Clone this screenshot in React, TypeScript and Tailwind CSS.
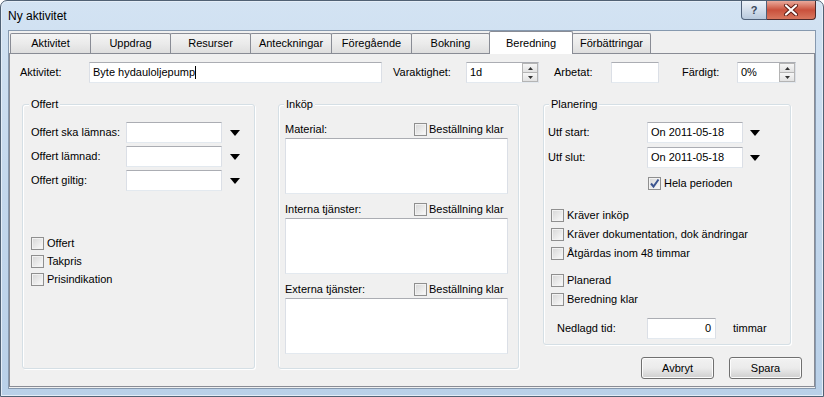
import React from 'react'

const tabs = [
  { label: 'Aktivitet', w: 'w-[81px]' },
  { label: 'Uppdrag', w: 'w-[81px]' },
  { label: 'Resurser', w: 'w-[81px]' },
  { label: 'Anteckningar', w: 'w-[82px]' },
  { label: 'Föregående', w: 'w-[81px]' },
  { label: 'Bokning', w: 'w-[79px]' },
  { label: 'Beredning', w: 'w-[84px]', active: true },
  { label: 'Förbättringar', w: 'w-[79px]' },
]

const boxCls =
  'h-[21px] bg-white border border-[#dbdfe6] border-t-[#abadb3] border-b-[#e3e9ef] px-[3px] leading-[19px] whitespace-nowrap overflow-hidden'

function DropArrow() {
  return (
    <svg width="10" height="6" viewBox="0 0 10 6" className="shrink-0">
      <polygon points="0,0 10,0 5,6" fill="#000" />
    </svg>
  )
}

function Check({ checked = false }: { checked?: boolean }) {
  return (
    <span className="w-[13px] h-[13px] shrink-0 border border-[#8f8f8f] bg-linear-to-br from-[#d6d6d6] to-[#fbfbfb] shadow-[inset_0_0_0_1px_#f2f2f2] flex items-center justify-center">
      {checked && (
        <svg width="11" height="11" viewBox="0 0 11 11">
          <path d="M2 5.5 L4.5 8.5 L9.5 1.5" stroke="#3c5590" strokeWidth="2" fill="none" />
        </svg>
      )}
    </span>
  )
}

function CheckRow({ label, checked, h = 'h-[18px]' }: { label: string; checked?: boolean; h?: string }) {
  return (
    <div className={`flex items-center gap-[3px] ${h}`}>
      <Check checked={checked} />
      <span>{label}</span>
    </div>
  )
}

function Spinner() {
  return (
    <div className="w-[16px] h-full flex flex-col shrink-0">
      <div className="flex-1 border border-[#b4b4b4] bg-linear-to-b from-[#f6f6f6] to-[#e2e2e2] flex items-center justify-center">
        <svg width="5" height="3" viewBox="0 0 5 3">
          <polygon points="0,3 5,3 2.5,0" fill="#333" />
        </svg>
      </div>
      <div className="flex-1 border border-t-0 border-[#b4b4b4] bg-linear-to-b from-[#f6f6f6] to-[#e2e2e2] flex items-center justify-center">
        <svg width="5" height="3" viewBox="0 0 5 3">
          <polygon points="0,0 5,0 2.5,3" fill="#333" />
        </svg>
      </div>
    </div>
  )
}

function Button({ label }: { label: string }) {
  return (
    <button className="w-[73px] h-[22px] rounded-[3px] border border-[#707070] bg-linear-to-b from-[#f2f2f2] via-[#ebebeb] to-[#cfcfcf] shadow-[inset_0_0_0_1px_#fcfcfc] text-[11px] text-black">
      {label}
    </button>
  )
}

export default function App() {
  return (
    <div className="w-[824px] h-[397px] font-['Liberation_Sans',Arial,sans-serif] text-[11px] text-black">
      {/* window frame */}
      <div className="w-full h-full flex flex-col px-[7px] pb-[7px] rounded-t-[7px] border border-[#506174] bg-linear-to-b from-[#d3e3f3] via-[#c3d7ec] to-[#b9d0e8] shadow-[inset_0_0_0_1px_#e4edf7]">
        {/* title bar */}
        <div className="h-[29px] flex justify-between">
          <div className="self-center text-[12px] pt-[1px]">Ny aktivitet</div>
          <div className="flex self-start">
            <div className="w-[26px] h-[19px] border border-[#4f6078] border-t-0 rounded-bl-[4px] bg-linear-to-b from-[#eef3f9] via-[#d3deeb] to-[#b8c9dd] flex items-center justify-center text-[11px] font-bold text-[#39475a]">
              ?
            </div>
            <div className="w-[49px] h-[19px] border border-[#4f2a2a] border-t-0 border-l-0 rounded-br-[4px] bg-linear-to-b from-[#e9a99b] via-[#c9503c] to-[#d8775f] flex items-center justify-center">
              <svg width="16" height="12" viewBox="0 0 16 12">
                <path d="M3 1.5 L13 10.5 M13 1.5 L3 10.5" stroke="#5a1a12" strokeWidth="4" strokeLinecap="round" />
                <path d="M3 1.5 L13 10.5 M13 1.5 L3 10.5" stroke="#fff" strokeWidth="2.2" strokeLinecap="round" />
              </svg>
            </div>
          </div>
        </div>

        {/* client area */}
        <div className="flex-1 flex flex-col bg-[#f0f0f0] border border-[#8699af] pb-[1px]">
          {/* tabs */}
          <div className="h-[22px] flex items-end pl-[1px]">
            {tabs.map((t, i) =>
              t.active ? (
                <div
                  key={t.label}
                  className={`${t.w} h-[23px] -mb-px -ml-px relative z-10 bg-white border border-b-0 border-[#898c95] rounded-t-[2px] flex justify-center pt-[3px]`}
                >
                  {t.label}
                </div>
              ) : (
                <div
                  key={t.label}
                  className={`${t.w} h-[20px] ${i > 0 ? '-ml-px' : ''} border border-b-0 border-[#898c95] rounded-t-[2px] bg-linear-to-b from-[#f3f3f3] via-[#ebebeb] to-[#dedede] flex items-center justify-center`}
                >
                  {t.label}
                </div>
              )
            )}
          </div>

          {/* tab page */}
          <div className="flex-1 border border-[#898c95] bg-[#f0f0f0] pt-[8px] pl-[10px]">
            {/* top row */}
            <div className="flex items-center h-[21px]">
              <span className="w-[69px]">Aktivitet:</span>
              <div className={`${boxCls} w-[293px] flex items-center`}>
                <span>Byte hydauloljepump</span>
                <span className="w-px h-[13px] bg-black" />
              </div>
              <span className="ml-[11px] w-[73px]">Varaktighet:</span>
              <div className={`${boxCls} w-[73px] flex pr-0 pl-[3px]`}>
                <span className="flex-1">1d</span>
                <Spinner />
              </div>
              <span className="ml-[15px] w-[57px]">Arbetat:</span>
              <div className={`${boxCls} w-[48px]`} />
              <span className="ml-[23px] w-[55px]">Färdigt:</span>
              <div className={`${boxCls} w-[59px] flex pr-0`}>
                <span className="flex-1">0%</span>
                <Spinner />
              </div>
            </div>

            {/* groups */}
            <div className="flex items-start mt-[21px] ml-[2px]">
              {/* Offert */}
              <div className="w-[233px] h-[265px] border border-[#d5dfe5] rounded-[3px] shadow-[inset_1px_1px_0_#fff,1px_1px_0_#fff] flex flex-col pl-[8px]">
                <span className="-mt-[8px] -ml-[2px] px-[2px] self-start bg-[#f0f0f0] leading-[14px]">Offert</span>
                <div className="mt-[11px] flex flex-col gap-[3px]">
                  {['Offert ska lämnas:', 'Offert lämnad:', 'Offert giltig:'].map(l => (
                    <div key={l} className="flex items-center h-[21px]">
                      <span className="w-[95px]">{l}</span>
                      <div className={`${boxCls} w-[96px]`} />
                      <span className="ml-[8px]">
                        <DropArrow />
                      </span>
                    </div>
                  ))}
                </div>
                <div className="mt-[43px]">
                  <CheckRow label="Offert" />
                  <CheckRow label="Takpris" />
                  <CheckRow label="Prisindikation" />
                </div>
              </div>

              {/* Inköp */}
              <div className="w-[241px] h-[265px] ml-[23px] border border-[#d5dfe5] rounded-[3px] shadow-[inset_1px_1px_0_#fff,1px_1px_0_#fff] flex flex-col pl-[6px] pr-[10px]">
                <span className="-mt-[8px] -ml-[1px] px-[2px] self-start bg-[#f0f0f0] leading-[14px]">Inköp</span>
                {['Material:', 'Interna tjänster:', 'Externa tjänster:'].map((l, i) => (
                  <div key={l} className={i === 0 ? 'mt-[10px]' : 'mt-[7px]'}>
                    <div className="flex items-center h-[16px]">
                      <span className="w-[129px]">{l}</span>
                      <Check />
                      <span className="ml-[2px]">Beställning klar</span>
                    </div>
                    <div className="mt-[1px] h-[56px] bg-white border border-[#e3e9ef] border-t-[#abadb3] border-l-[#dbdfe6] border-r-[#dbdfe6]" />
                  </div>
                ))}
              </div>

              {/* Planering + buttons */}
              <div className="w-[259px] ml-[24px] flex flex-col">
                <div className="w-[248px] border border-[#d5dfe5] rounded-[3px] shadow-[inset_1px_1px_0_#fff,1px_1px_0_#fff] flex flex-col pl-[4px] pb-[5px]">
                  <span className="-mt-[8px] ml-[1px] px-[2px] self-start bg-[#f0f0f0] leading-[14px]">Planering</span>
                  <div className="mt-[11px] flex flex-col gap-[4px]">
                    {['Utf start:', 'Utf slut:'].map(l => (
                      <div key={l} className="flex items-center h-[21px]">
                        <span className="w-[99px]">{l}</span>
                        <div className={`${boxCls} w-[96px]`}>On 2011-05-18</div>
                        <span className="ml-[7px]">
                          <DropArrow />
                        </span>
                      </div>
                    ))}
                  </div>
                  <div className="mt-[6px] pl-[100px]">
                    <CheckRow label="Hela perioden" checked />
                  </div>
                  <div className="mt-[14px] pl-[3px]">
                    <CheckRow label="Kräver inköp" h="h-[19px]" />
                    <CheckRow label="Kräver dokumentation, dok ändringar" h="h-[19px]" />
                    <CheckRow label="Åtgärdas inom 48 timmar" h="h-[19px]" />
                  </div>
                  <div className="mt-[8px] pl-[3px]">
                    <CheckRow label="Planerad" h="h-[19px]" />
                    <CheckRow label="Beredning klar" h="h-[19px]" />
                  </div>
                  <div className="mt-[9px] pl-[9px] flex items-center h-[21px]">
                    <span className="w-[90px]">Nedlagd tid:</span>
                    <div className={`${boxCls} w-[69px] text-right pr-[4px]`}>0</div>
                    <span className="ml-[17px]">timmar</span>
                  </div>
                </div>
                <div className="mt-[12px] flex justify-end gap-[15px]">
                  <Button label="Avbryt" />
                  <Button label="Spara" />
                </div>
              </div>
            </div>
          </div>
        </div>
      </div>
    </div>
  )
}
